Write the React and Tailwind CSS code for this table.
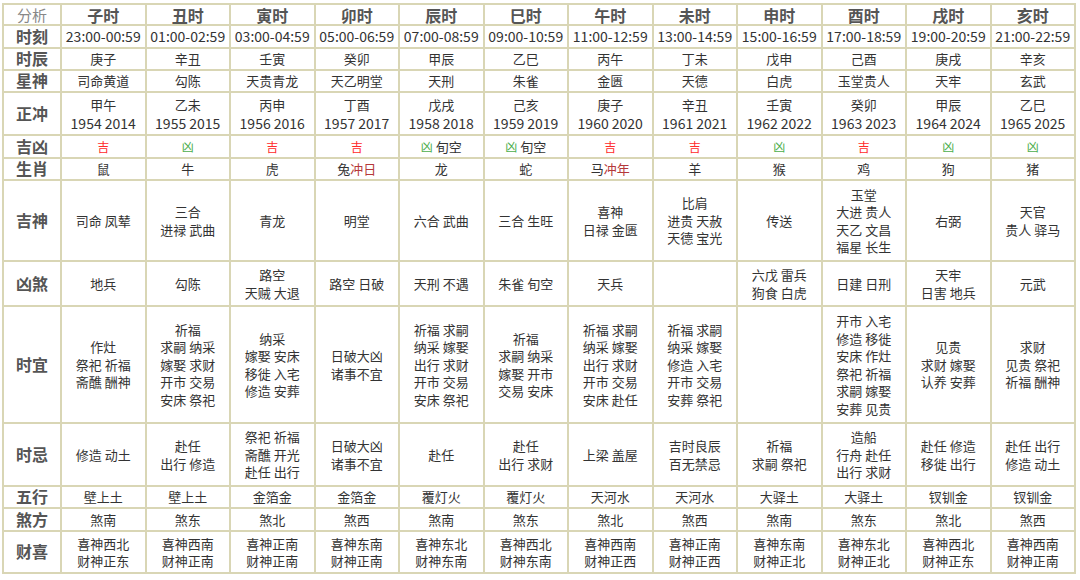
// 时辰吉凶 table — twelve double-hours, one column each.

import React from "react";

const HOURS = ["子时", "丑时", "寅时", "卯时", "辰时", "巳时", "午时", "未时", "申时", "酉时", "戌时", "亥时"];

const TIMES = [
  "23:00-00:59", "01:00-02:59", "03:00-04:59", "05:00-06:59", "07:00-08:59", "09:00-10:59",
  "11:00-12:59", "13:00-14:59", "15:00-16:59", "17:00-18:59", "19:00-20:59", "21:00-22:59",
];

const GANZHI = ["庚子", "辛丑", "壬寅", "癸卯", "甲辰", "乙巳", "丙午", "丁未", "戊申", "己酉", "庚戌", "辛亥"];

const XINGSHEN = ["司命黄道", "勾陈", "天贵青龙", "天乙明堂", "天刑", "朱雀", "金匮", "天德", "白虎", "玉堂贵人", "天牢", "玄武"];

const CHONG = [
  ["甲午", "1954 2014"], ["乙未", "1955 2015"], ["丙申", "1956 2016"], ["丁酉", "1957 2017"],
  ["戊戌", "1958 2018"], ["己亥", "1959 2019"], ["庚子", "1960 2020"], ["辛丑", "1961 2021"],
  ["壬寅", "1962 2022"], ["癸卯", "1963 2023"], ["甲辰", "1964 2024"], ["乙巳", "1965 2025"],
];

// [吉 or 凶, extra note]
const JIXIONG = [
  ["吉"], ["凶"], ["吉"], ["吉"], ["凶", "旬空"], ["凶", "旬空"],
  ["吉"], ["吉"], ["凶"], ["吉"], ["凶"], ["凶"],
];

// [animal, red suffix]
const SHENGXIAO = [
  ["鼠"], ["牛"], ["虎"], ["兔", "冲日"], ["龙"], ["蛇"],
  ["马", "冲年"], ["羊"], ["猴"], ["鸡"], ["狗"], ["猪"],
];

const JISHEN = [
  ["司命 凤辇"], ["三合", "进禄 武曲"], ["青龙"], ["明堂"], ["六合 武曲"], ["三合 生旺"],
  ["喜神", "日禄 金匮"], ["比肩", "进贵 天赦", "天德 宝光"], ["传送"],
  ["玉堂", "大进 贵人", "天乙 文昌", "福星 长生"], ["右弼"], ["天官", "贵人 驿马"],
];

const XIONGSHA = [
  ["地兵"], ["勾陈"], ["路空", "天贼 大退"], ["路空 日破"], ["天刑 不遇"], ["朱雀 旬空"],
  ["天兵"], [], ["六戊 雷兵", "狗食 白虎"], ["日建 日刑"], ["天牢", "日害 地兵"], ["元武"],
];

const SHIYI = [
  ["作灶", "祭祀 祈福", "斋醮 酬神"],
  ["祈福", "求嗣 纳采", "嫁娶 求财", "开市 交易", "安床 祭祀"],
  ["纳采", "嫁娶 安床", "移徙 入宅", "修造 安葬"],
  ["日破大凶", "诸事不宜"],
  ["祈福 求嗣", "纳采 嫁娶", "出行 求财", "开市 交易", "安床 祭祀"],
  ["祈福", "求嗣 纳采", "嫁娶 开市", "交易 安床"],
  ["祈福 求嗣", "纳采 嫁娶", "出行 求财", "开市 交易", "安床 赴任"],
  ["祈福 求嗣", "纳采 嫁娶", "修造 入宅", "开市 交易", "安葬 祭祀"],
  [],
  ["开市 入宅", "修造 移徙", "安床 作灶", "祭祀 祈福", "求嗣 嫁娶", "安葬 见贵"],
  ["见贵", "求财 嫁娶", "认养 安葬"],
  ["求财", "见贵 祭祀", "祈福 酬神"],
];

const SHIJI = [
  ["修造 动土"], ["赴任", "出行 修造"], ["祭祀 祈福", "斋醮 开光", "赴任 出行"],
  ["日破大凶", "诸事不宜"], ["赴任"], ["赴任", "出行 求财"], ["上梁 盖屋"],
  ["吉时良辰", "百无禁忌"], ["祈福", "求嗣 祭祀"], ["造船", "行舟 赴任", "出行 求财"],
  ["赴任 修造", "移徙 出行"], ["赴任 出行", "修造 动土"],
];

const WUXING = ["壁上土", "壁上土", "金箔金", "金箔金", "覆灯火", "覆灯火", "天河水", "天河水", "大驿土", "大驿土", "钗钏金", "钗钏金"];

const SHAFANG = ["煞南", "煞东", "煞北", "煞西", "煞南", "煞东", "煞北", "煞西", "煞南", "煞东", "煞北", "煞西"];

const CAIXI = [
  ["喜神西北", "财神正东"], ["喜神西南", "财神正南"], ["喜神正南", "财神正南"], ["喜神东南", "财神正南"],
  ["喜神东北", "财神东南"], ["喜神西北", "财神东南"], ["喜神西南", "财神正西"], ["喜神正南", "财神正西"],
  ["喜神东南", "财神正北"], ["喜神东北", "财神正北"], ["喜神西北", "财神正东"], ["喜神西南", "财神正南"],
];

const cell = "border-2 border-[#d9d6b5] text-center align-middle p-0 whitespace-nowrap";
const label = `${cell} text-[16px] font-bold text-[#555555]`;

function Lines({ lines }) {
  return lines.map((l, i) => <div key={i}>{l}</div>);
}

function Row({ name, h, children }) {
  return (
    <tr className={h}>
      <td className={label}>{name}</td>
      {children}
    </tr>
  );
}

export default function App() {
  return (
    <div
      className="w-[1080px] h-[580px] bg-white pl-[2px] pt-[3px] text-[#333333] text-[13px] leading-[17.5px]"
      style={{ fontFamily: '"Noto Sans CJK SC", "Noto Sans", sans-serif' }}
    >
      <table className="table-fixed border-collapse w-[1072px]">
        <colgroup>
          <col className="w-[58px]" />
          {HOURS.map((h) => (
            <col key={h} className="w-[84.5px]" />
          ))}
        </colgroup>
        <tbody>
          <tr className="h-[21px]">
            <td className={`${cell} text-[15px] text-[#888888]`}>分析</td>
            {HOURS.map((h) => (
              <td key={h} className={`${cell} text-[16px] font-bold text-[#555555] leading-[18px]`}>{h}</td>
            ))}
          </tr>
          <Row name="时刻" h="h-[23px]">
            {TIMES.map((t) => (
              <td key={t} className={`${cell} text-[14px]`}>{t}</td>
            ))}
          </Row>
          <Row name="时辰" h="h-[22px]">
            {GANZHI.map((g, i) => (
              <td key={i} className={cell}>{g}</td>
            ))}
          </Row>
          <Row name="星神" h="h-[22px]">
            {XINGSHEN.map((g, i) => (
              <td key={i} className={cell}>{g}</td>
            ))}
          </Row>
          <Row name="正冲" h="h-[43px]">
            {CHONG.map(([gz, yr], i) => (
              <td key={i} className={`${cell} leading-[18px]`}>
                <div>{gz}</div>
                <div className="text-[14px] leading-[18px]">{yr}</div>
              </td>
            ))}
          </Row>
          <Row name="吉凶" h="h-[23px]">
            {JIXIONG.map(([v, note], i) => (
              <td key={i} className={cell}>
                <span className={v === "吉" ? "text-[#ff2a2a] text-[12px]" : "text-[#4cae4c] text-[12px]"}>{v}</span>
                {note && <span> {note}</span>}
              </td>
            ))}
          </Row>
          <Row name="生肖" h="h-[22px]">
            {SHENGXIAO.map(([a, red], i) => (
              <td key={i} className={cell}>
                {a}
                {red && <span className="text-[#b5383a]">{red}</span>}
              </td>
            ))}
          </Row>
          <Row name="吉神" h="h-[81px]">
            {JISHEN.map((l, i) => (
              <td key={i} className={cell}><Lines lines={l} /></td>
            ))}
          </Row>
          <Row name="凶煞" h="h-[45px]">
            {XIONGSHA.map((l, i) => (
              <td key={i} className={cell}><Lines lines={l} /></td>
            ))}
          </Row>
          <Row name="时宜" h="h-[117px]">
            {SHIYI.map((l, i) => (
              <td key={i} className={cell}><Lines lines={l} /></td>
            ))}
          </Row>
          <Row name="时忌" h="h-[63px]">
            {SHIJI.map((l, i) => (
              <td key={i} className={cell}><Lines lines={l} /></td>
            ))}
          </Row>
          <Row name="五行" h="h-[22px]">
            {WUXING.map((w, i) => (
              <td key={i} className={cell}>{w}</td>
            ))}
          </Row>
          <Row name="煞方" h="h-[23px]">
            {SHAFANG.map((w, i) => (
              <td key={i} className={cell}>{w}</td>
            ))}
          </Row>
          <Row name="财喜" h="h-[42px]">
            {CAIXI.map((l, i) => (
              <td key={i} className={cell}><Lines lines={l} /></td>
            ))}
          </Row>
        </tbody>
      </table>
    </div>
  );
}
